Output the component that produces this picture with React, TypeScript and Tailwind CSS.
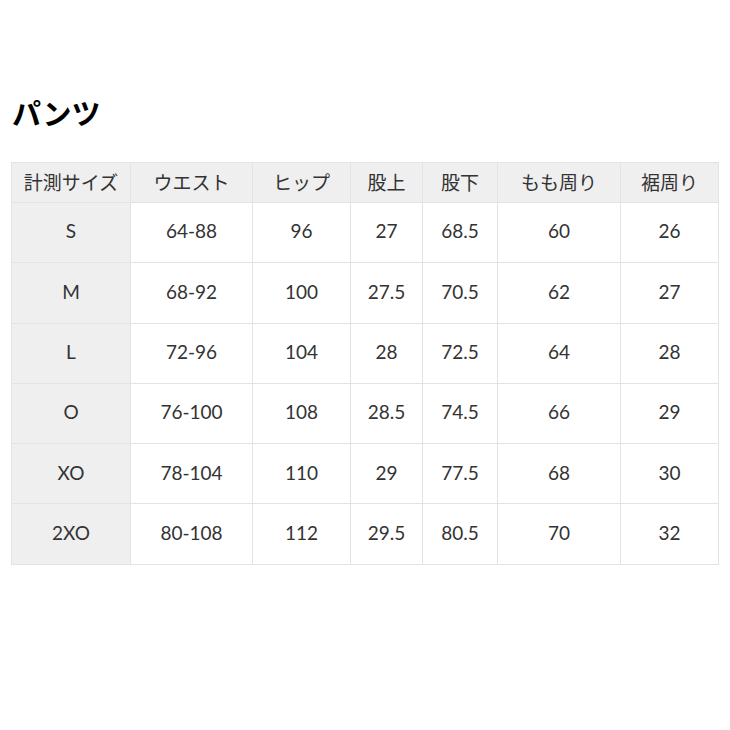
import React from "react";

const headers = ["計測サイズ", "ウエスト", "ヒップ", "股上", "股下", "もも周り", "裾周り"];
const widths = ["w-[119px]", "w-[122px]", "w-[98px]", "w-[72px]", "w-[75px]", "w-[123px]", "w-[98px]"];

const rows = [
  ["S", "64-88", "96", "27", "68.5", "60", "26"],
  ["M", "68-92", "100", "27.5", "70.5", "62", "27"],
  ["L", "72-96", "104", "28", "72.5", "64", "28"],
  ["O", "76-100", "108", "28.5", "74.5", "66", "29"],
  ["XO", "78-104", "110", "29", "77.5", "68", "30"],
  ["2XO", "80-108", "112", "29.5", "80.5", "70", "32"],
];

export default function App() {
  return (
    <div className="w-[730px] h-[730px] bg-white px-[11px] pt-[92px] text-[#333]">
      <h2 className="text-[29px] font-bold leading-[40px] text-black font-['Noto_Sans_CJK_JP',sans-serif] pl-px">
        パンツ
      </h2>
      <table className="mt-[30px] w-[708px] table-fixed border-collapse">
        <thead>
          <tr className="bg-[#efefef] h-[40px]">
            {headers.map((h, i) => (
              <th
                key={h}
                className={`${widths[i]} border border-[#e3e3e3] font-normal text-[19px] text-center font-['Noto_Sans_CJK_JP',sans-serif]`}
              >
                {h}
              </th>
            ))}
          </tr>
        </thead>
        <tbody>
          {rows.map((r) => (
            <tr key={r[0]} className="h-[60.3px]">
              {r.map((c, i) => (
                <td
                  key={i}
                  className={`border border-[#e3e3e3] text-center text-[19px] pb-[2px] font-['Lato',sans-serif] ${
                    i === 0 ? "bg-[#efefef]" : "bg-white"
                  }`}
                >
                  {c}
                </td>
              ))}
            </tr>
          ))}
        </tbody>
      </table>
    </div>
  );
}
